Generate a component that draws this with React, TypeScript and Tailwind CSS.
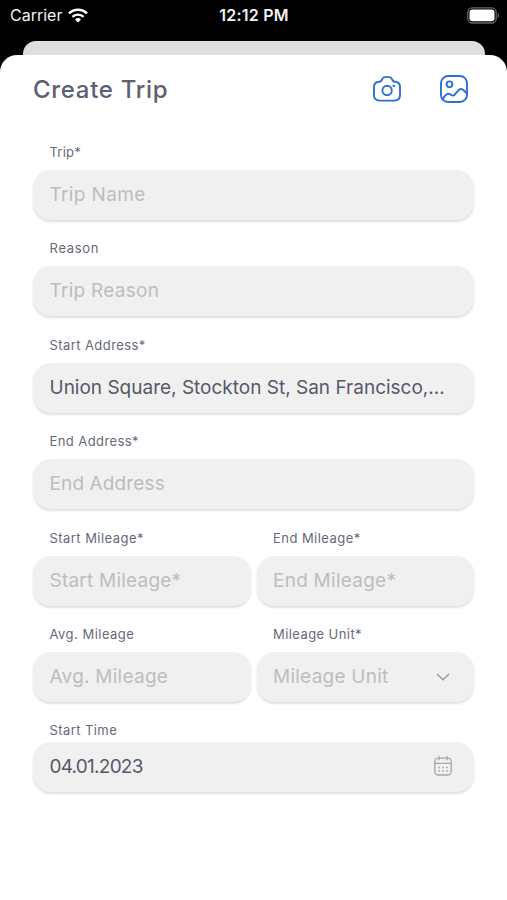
import type { ReactNode } from "react";

type FieldProps = {
  label: string;
  text: string;
  filled?: boolean;
  labelClass: string;
  textClass: string;
  tight?: boolean;
  icon?: ReactNode;
};

function Field({ label, text, filled, labelClass, textClass, tight, icon }: FieldProps) {
  return (
    <div className="min-w-0 flex-1">
      <div className={`h-5 pl-[16.5px] text-[13px] leading-5 whitespace-nowrap text-[#666a78] ${labelClass}`}>
        {label}
      </div>
      <div
        className={`flex h-[50px] items-center justify-between rounded-[18px] bg-[#f0f0f0] pr-5 pl-[16.5px] shadow-[0_2px_2.5px_rgba(0,0,0,0.13)] ${tight ? "mt-[1.5px]" : "mt-2"}`}
      >
        <span
          className={`text-[19px] leading-6 whitespace-nowrap ${filled ? "text-[#555969]" : "text-[#bdbdbf]"} ${textClass}`}
        >
          {text}
        </span>
        {icon}
      </div>
    </div>
  );
}

function StatusBar() {
  return (
    <div className="grid h-[30px] grid-cols-3 items-center pr-[7px] pl-[10px] text-[#f2f2f2]">
      <div className="flex items-center gap-[6px]">
        <span className="text-[16px] leading-5">Carrier</span>
        <svg width="20" height="15" viewBox="0 0 21 15" fill="none" stroke="#fff" strokeWidth="2.6">
          <path d="M1 5.3a13.4 13.4 0 0 1 19 0" />
          <path d="M4.6 9a8.4 8.4 0 0 1 11.8 0" />
          <path d="M10.5 14.8 7.4 11.6a4.4 4.4 0 0 1 6.2 0z" fill="#fff" stroke="none" />
        </svg>
      </div>
      <div className="pr-[2px] text-center text-[16px] leading-5 font-semibold tracking-[0.25px] whitespace-nowrap">
        12:12 PM
      </div>
      <svg className="justify-self-end" width="33" height="17" viewBox="0 0 33 17">
        <rect x="0.8" y="0.8" width="28.4" height="15.2" rx="4.5" fill="none" stroke="#666" strokeWidth="1.3" />
        <rect x="2.5" y="2.6" width="25" height="11.6" rx="3" fill="#fff" />
        <path d="M30.7 6v5c1.8-.6 1.8-4.400 0-5z" fill="#666" />
      </svg>
    </div>
  );
}

function CameraIcon() {
  return (
    <svg width="28" height="26" viewBox="0 0 28 26" fill="none" stroke="#2f6fd0" strokeWidth="1.9" strokeLinejoin="round">
      <path d="M6.300 5.700c1.300 0 2-.6 2.500-1.700C9.500 2 10.200 1.100 12 1.100h4.200c1.800 0 2.500.9 3.200 2.900.5 1.100 1.200 1.700 2.500 1.700 3.300.2 5.100 2 5.100 5.200v8.200c0 3.600-1.900 5.500-5.500 5.500h-15C2.900 24.600 1 22.700 1 19.100v-8.200c0-3.200 1.900-5 5.300-5.200Z" />
      <circle cx="14.100" cy="14.500" r="4.700" />
      <circle cx="20.800" cy="10" r="1.300" fill="#2f6fd0" stroke="none" />
    </svg>
  );
}

function GalleryIcon() {
  return (
    <svg width="28" height="28" viewBox="0 0 28 28" fill="none" stroke="#2f6fd0" strokeWidth="1.9" strokeLinejoin="round" strokeLinecap="round">
      <rect x="1" y="1" width="26" height="26" rx="7" />
      <circle cx="9.500" cy="9.300" r="2.900" />
      <path d="M2.600 24.300c1.800-3.200 3.300-5.400 5.400-5.600 2.400-.2 3.300 2.200 5.200 1.900 2.700-.5 4.300-6.300 7.300-6.600 2.700-.2 4.500 2.200 6.300 4.600" />
    </svg>
  );
}

function ChevronIcon() {
  return (
    <svg className="mr-1 shrink-0" width="14" height="8" viewBox="0 0 14 8" fill="none" stroke="#999b9f" strokeWidth="1.500">
      <path d="m1 1 6 5.700L13 1" />
    </svg>
  );
}

function CalendarIcon() {
  return (
    <svg className="mr-[2px] mb-[2px] shrink-0" width="18" height="20" viewBox="0 0 18 20" fill="none" stroke="#a3a5a8" strokeWidth="1.300">
      <rect x="0.800" y="2.200" width="16.400" height="16.800" rx="3.500" />
      <path d="M1 7.400h16M5 0v4.200M13 0v4.200" />
      <path d="M4.200 11.500h1.700M8.200 11.500h1.700M12.100 11.500h1.700M4.200 15h1.700M8.200 15h1.700M12.100 15h1.700" strokeWidth="1.500" />
    </svg>
  );
}

export default function App() {
  return (
    <div className="flex h-[900px] w-[507px] flex-col overflow-hidden bg-black font-['Inter','Liberation_Sans',sans-serif]">
      <StatusBar />
      <div className="mt-[11px] mr-[22px] ml-[23px] h-[14px] shrink-0 rounded-t-[13px] bg-[#dfdfdf]" />
      <main className="flex-1 rounded-t-[17px] bg-white px-[33px]">
        <header className="flex h-[68px] items-center justify-between pr-[6px]">
          <h1 className="pt-[2px] text-[24px] leading-8 font-medium tracking-[0.7px] text-[#5c6073]">Create Trip</h1>
          <div className="flex items-center gap-[39px]">
            <CameraIcon />
            <GalleryIcon />
          </div>
        </header>
        <form className="mt-[19px] flex flex-col gap-[18.4px]">
          <Field label="Trip*" labelClass="tracking-[0.2px]" text="Trip Name" textClass="tracking-[0.35px]" />
          <Field label="Reason" labelClass="tracking-[0.7px]" text="Trip Reason" textClass="tracking-[0.27px]" />
          <Field
            label="Start Address*"
            labelClass="tracking-[0.42px]"
            text="Union Square, Stockton St, San Francisco,..."
            textClass="tracking-normal"
            filled
          />
          <Field label="End Address*" labelClass="tracking-[0.42px]" text="End Address" textClass="tracking-[0.12px]" />
          <div className="flex gap-[6px]">
            <Field label="Start Mileage*" labelClass="tracking-[0.45px]" text="Start Mileage*" textClass="tracking-[0.22px]" />
            <Field label="End Mileage*" labelClass="tracking-[0.45px]" text="End Mileage*" textClass="tracking-[0.25px]" />
          </div>
          <div className="flex gap-[6px]">
            <Field label="Avg. Mileage" labelClass="tracking-[0.48px]" text="Avg. Mileage" textClass="tracking-[0.25px]" />
            <Field
              label="Mileage Unit*"
              labelClass="tracking-[0.42px]"
              text="Mileage Unit"
              textClass="tracking-[0.25px]"
              icon={<ChevronIcon />}
            />
          </div>
          <Field
            label="Start Time"
            labelClass="tracking-[0.42px]"
            text="04.01.2023"
            textClass="tracking-[-0.75px]"
            filled
            tight
            icon={<CalendarIcon />}
          />
        </form>
      </main>
    </div>
  );
}
